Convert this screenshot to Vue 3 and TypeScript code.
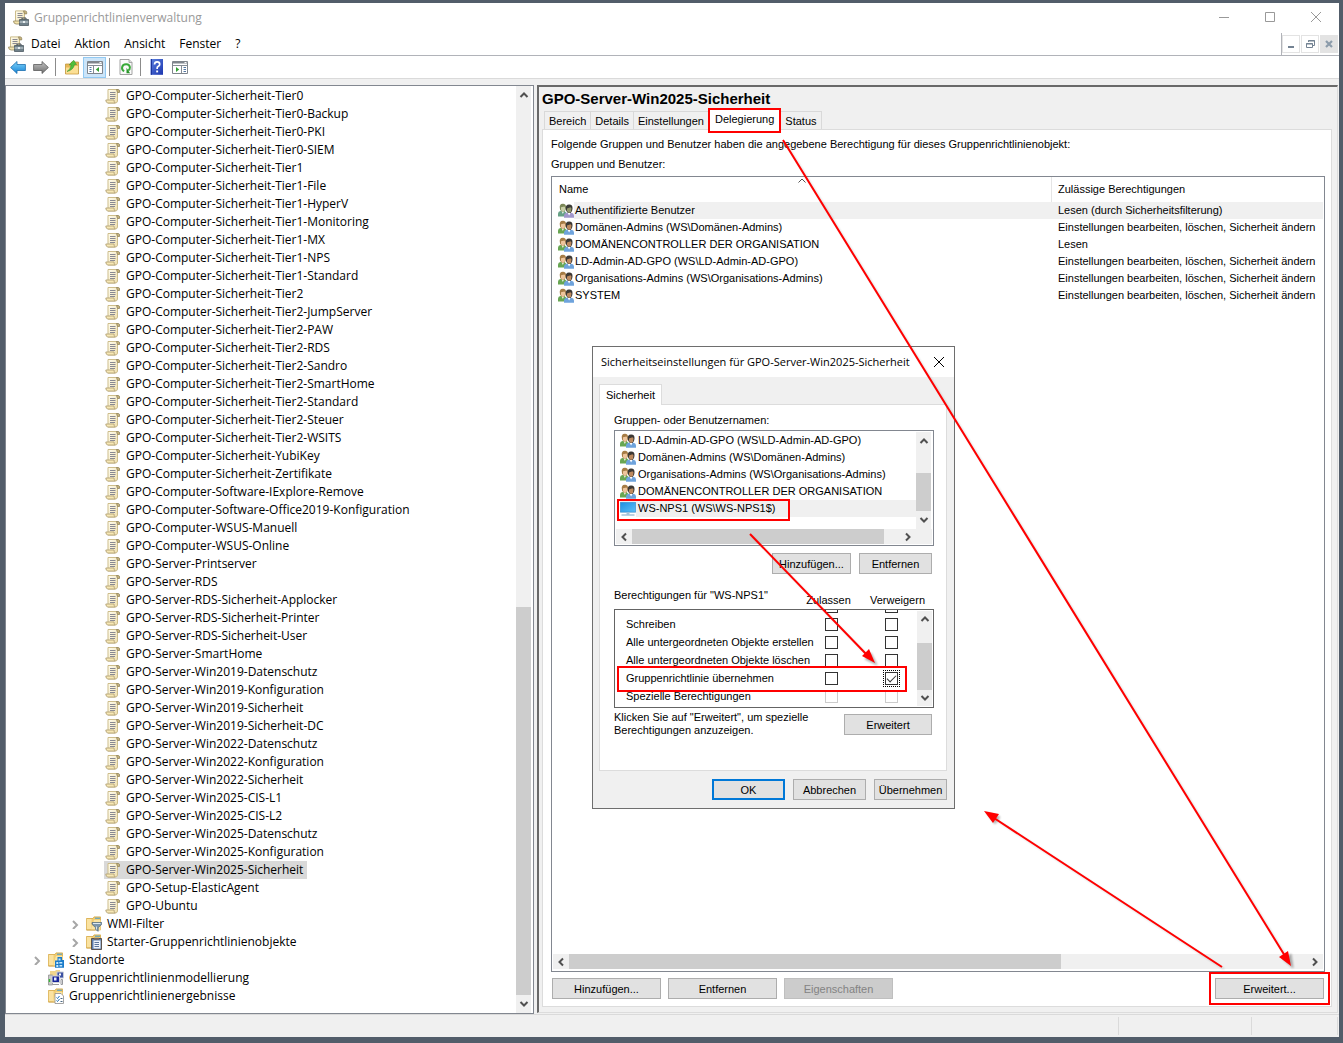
<script setup lang="ts">
import { ref } from 'vue'

interface TreeNode {
  label: string
  level: number
  icon: string
  expandable?: boolean
}

const gpoNames: string[] = [
  'GPO-Computer-Sicherheit-Tier0',
  'GPO-Computer-Sicherheit-Tier0-Backup',
  'GPO-Computer-Sicherheit-Tier0-PKI',
  'GPO-Computer-Sicherheit-Tier0-SIEM',
  'GPO-Computer-Sicherheit-Tier1',
  'GPO-Computer-Sicherheit-Tier1-File',
  'GPO-Computer-Sicherheit-Tier1-HyperV',
  'GPO-Computer-Sicherheit-Tier1-Monitoring',
  'GPO-Computer-Sicherheit-Tier1-MX',
  'GPO-Computer-Sicherheit-Tier1-NPS',
  'GPO-Computer-Sicherheit-Tier1-Standard',
  'GPO-Computer-Sicherheit-Tier2',
  'GPO-Computer-Sicherheit-Tier2-JumpServer',
  'GPO-Computer-Sicherheit-Tier2-PAW',
  'GPO-Computer-Sicherheit-Tier2-RDS',
  'GPO-Computer-Sicherheit-Tier2-Sandro',
  'GPO-Computer-Sicherheit-Tier2-SmartHome',
  'GPO-Computer-Sicherheit-Tier2-Standard',
  'GPO-Computer-Sicherheit-Tier2-Steuer',
  'GPO-Computer-Sicherheit-Tier2-WSITS',
  'GPO-Computer-Sicherheit-YubiKey',
  'GPO-Computer-Sicherheit-Zertifikate',
  'GPO-Computer-Software-IExplore-Remove',
  'GPO-Computer-Software-Office2019-Konfiguration',
  'GPO-Computer-WSUS-Manuell',
  'GPO-Computer-WSUS-Online',
  'GPO-Server-Printserver',
  'GPO-Server-RDS',
  'GPO-Server-RDS-Sicherheit-Applocker',
  'GPO-Server-RDS-Sicherheit-Printer',
  'GPO-Server-RDS-Sicherheit-User',
  'GPO-Server-SmartHome',
  'GPO-Server-Win2019-Datenschutz',
  'GPO-Server-Win2019-Konfiguration',
  'GPO-Server-Win2019-Sicherheit',
  'GPO-Server-Win2019-Sicherheit-DC',
  'GPO-Server-Win2022-Datenschutz',
  'GPO-Server-Win2022-Konfiguration',
  'GPO-Server-Win2022-Sicherheit',
  'GPO-Server-Win2025-CIS-L1',
  'GPO-Server-Win2025-CIS-L2',
  'GPO-Server-Win2025-Datenschutz',
  'GPO-Server-Win2025-Konfiguration',
  'GPO-Server-Win2025-Sicherheit',
  'GPO-Setup-ElasticAgent',
  'GPO-Ubuntu',
]

const nodes: TreeNode[] = [
  ...gpoNames.map((label) => ({ label, level: 3, icon: 'i-gpo' })),
  { label: 'WMI-Filter', level: 2, icon: 'i-wmi', expandable: true },
  { label: 'Starter-Gruppenrichtlinienobjekte', level: 2, icon: 'i-starter', expandable: true },
  { label: 'Standorte', level: 0, icon: 'i-sites', expandable: true },
  { label: 'Gruppenrichtlinienmodellierung', level: 0, icon: 'i-model' },
  { label: 'Gruppenrichtlinienergebnisse', level: 0, icon: 'i-result' },
]

const selected = ref('GPO-Server-Win2025-Sicherheit')

const menus: string[] = ['Datei', 'Aktion', 'Ansicht', 'Fenster', '?']

const tabs: string[] = ['Bereich', 'Details', 'Einstellungen', 'Delegierung', 'Status']
const activeTab = ref('Delegierung')

const full = 'Einstellungen bearbeiten, löschen, Sicherheit ändern'
const delegates = [
  { name: 'Authentifizierte Benutzer', right: 'Lesen (durch Sicherheitsfilterung)' },
  { name: 'Domänen-Admins (WS\\Domänen-Admins)', right: full },
  { name: 'DOMÄNENCONTROLLER DER ORGANISATION', right: 'Lesen' },
  { name: 'LD-Admin-AD-GPO (WS\\LD-Admin-AD-GPO)', right: full },
  { name: 'Organisations-Admins (WS\\Organisations-Admins)', right: full },
  { name: 'SYSTEM', right: full },
]

const principals = [
  { name: 'LD-Admin-AD-GPO (WS\\LD-Admin-AD-GPO)', icon: 'i-group' },
  { name: 'Domänen-Admins (WS\\Domänen-Admins)', icon: 'i-group' },
  { name: 'Organisations-Admins (WS\\Organisations-Admins)', icon: 'i-group' },
  { name: 'DOMÄNENCONTROLLER DER ORGANISATION', icon: 'i-group' },
  { name: 'WS-NPS1 (WS\\WS-NPS1$)', icon: 'i-pc' },
]
const principal = ref('WS-NPS1 (WS\\WS-NPS1$)')

const permissions = ref([
  { name: '', allow: false, deny: false, locked: false },
  { name: 'Schreiben', allow: false, deny: false, locked: false },
  { name: 'Alle untergeordneten Objekte erstellen', allow: false, deny: false, locked: false },
  { name: 'Alle untergeordneten Objekte löschen', allow: false, deny: false, locked: false },
  { name: 'Gruppenrichtlinie übernehmen', allow: false, deny: true, locked: false },
  { name: 'Spezielle Berechtigungen', allow: false, deny: false, locked: true },
])
</script>

<template>
  <div class="desktop">
    <svg class="defs" aria-hidden="true">
      <defs>
        <linearGradient id="g-paper" x1="0" x2="1" y1="0" y2="1">
          <stop offset="0" stop-color="#fffdf0" /><stop offset="1" stop-color="#efdfae" />
        </linearGradient>
        <linearGradient id="g-blue" x1="0" x2="0" y1="0" y2="1">
          <stop offset="0" stop-color="#7fd4fb" /><stop offset="1" stop-color="#1583d6" />
        </linearGradient>
        <linearGradient id="g-grey" x1="0" x2="0" y1="0" y2="1">
          <stop offset="0" stop-color="#c4c4c4" /><stop offset="1" stop-color="#6e6e6e" />
        </linearGradient>
        <linearGradient id="g-help" x1="0" x2="1" y1="0" y2="1">
          <stop offset="0" stop-color="#5b80e0" /><stop offset="1" stop-color="#1b35ae" />
        </linearGradient>
        <linearGradient id="g-screen" x1="0" x2="1" y1="0" y2="1">
          <stop offset="0" stop-color="#1e8de0" /><stop offset="1" stop-color="#5cc0f8" />
        </linearGradient>
        <symbol id="i-gpo" viewBox="0 0 16 16">
          <path d="M3 1.500H12.500V13q-.3 2-2 2H3z" fill="url(#g-paper)" stroke="#cdbd8b" />
          <path d="M11.500 1.500h2q1 .2 1 1.500v1.500h-2z" fill="#c9b67c" stroke="#91845d" stroke-width=".8" />
          <path d="M.8 12h8.200q0 2.200 1.200 3H2.800Q.9 14.800.8 12z" fill="#f7e8b4" stroke="#b3a377" stroke-width=".9" />
          <path d="M5 4.500h5.500M5 6.500h5.500M5 8.500h5.500M5 10.500h5" stroke="#8a8a92" />
        </symbol>
        <symbol id="i-app" viewBox="0 0 16 16">
          <path d="M2.500.9H11.500V12q-.3 1.500-2 1.500h-7z" fill="url(#g-paper)" stroke="#cdbd8b" />
          <path d="M10.500.9h2q1.200.2 1.200 1.500v1.500h-2.200z" fill="#c9b67c" stroke="#91845d" stroke-width=".8" />
          <path d="M4.500 3.500h5M4.500 5.500h5M4.500 7.500h4.500" stroke="#8a8a92" />
          <path d="M.5 11h8v3H3q-2.400-.2-2.500-3z" fill="#f4e4ad" stroke="#96895f" stroke-width=".8" />
          <path d="M9 9.500V8h4v1.500" fill="none" stroke="#3f474c" />
          <path d="M6.500 9.500h9v6h-9z" fill="#70818a" stroke="#3e4c54" stroke-width=".7" />
          <path d="M6.600 12h8.700" stroke="#d1dade" /><path d="M10 11h2v2h-2z" fill="#e7eef0" />
        </symbol>
        <symbol id="i-folder" viewBox="0 0 16 16">
          <path d="M.5 2.500h6.500l1-1.600h6.500v13H.5z" fill="#f0cd72" stroke="#d5a743" stroke-width=".8" />
          <path d="M9 2.200h5" stroke="#3e98d4" /><path d="M8 4h6.500v10H5z" fill="#fbe5a3" /><path d="M.8 3h4.700v10.600H.8z" fill="#fae2a0" />
          <path d="M.5 14h9" stroke="#c99c3e" stroke-width=".8" />
        </symbol>
        <symbol id="i-wmi" viewBox="0 0 16 16">
          <use href="#i-folder" />
          <path d="M6 6.500h9.800v1.800l-3.600 3.400v3.600l-2.600-1.800v-1.800L6 8.300z" fill="#7b96aa" stroke="#526b7d" stroke-width=".7" />
          <path d="M7 7.500h7.500" stroke="#dce9f1" /><path d="M10.500 10.500v3" stroke="#d6e3eb" />
        </symbol>
        <symbol id="i-starter" viewBox="0 0 16 16">
          <use href="#i-folder" />
          <path d="M5.500 4.500h10v11h-10z" fill="#5d7fae" stroke="#54473f" stroke-width=".9" />
          <path d="M7.500 6.500h7v8h-7z" fill="#eef4fb" /><path d="M8 3.800h5v2H8z" fill="#796a60" />
          <path d="M8.500 8.500h4.500M8.500 10.500h4.500M8.500 12.500h4.500" stroke="#5d779c" />
        </symbol>
        <symbol id="i-sites" viewBox="0 0 16 16">
          <use href="#i-folder" />
          <path d="M9.500 5h4.500v3h2v7.800H7V8.500h2.500z" fill="#1a7bc9" />
          <path d="M10.500 6.500h2v2h-2zM8.300 10h2v2h-2zM11.300 10h3v1.500h-3zM8.300 13h2v2h-2zM11.500 13h2.700v1.500h-2.700z" fill="#c7e8fb" />
        </symbol>
        <symbol id="i-model" viewBox="0 0 16 16">
          <path d="M2 1h5l1-1h4v7H2z" fill="#f1d68c" /><path d="M.5 5h4v10h-4z" fill="#c8cac9" stroke="#888" stroke-width=".7" />
          <path d="M1.500 9v3" stroke="#37ba35" stroke-width="1.400" />
          <path d="M9 2h6.500v6H9z" fill="#3c52a3" stroke="#c7ccd6" /><path d="M11 3.500h2v2h-2z" fill="#fff" />
          <path d="M4 6h7.500v6.500H4z" fill="#18259a" stroke="#d0d2d8" /><path d="M6 7.500h2.500v3H6z" fill="#e6edff" />
          <path d="M13 9.500h1.500v5H13zM5 14.500h6" stroke="#97989d" fill="none" />
        </symbol>
        <symbol id="i-result" viewBox="0 0 16 16">
          <use href="#i-folder" />
          <path d="M7 5.500h6l2.500 2.500v7.500H7z" fill="#fff" stroke="#8d8d8d" stroke-width=".8" />
          <path d="M8.500 9.500l1 1 2-2.500M8.500 12.500l1 1 2-2.500" fill="none" stroke="#1a6fb8" /><path d="M12.500 10.500h2M12.500 13.500h2" stroke="#4a6984" />
        </symbol>
        <symbol id="i-group" viewBox="0 0 16 16">
          <path d="M0 13.500V10.500Q.2 8.300 2.500 8h4l2 2-1 3.500z" fill="#68a653" /><path d="M3.500 8l1.300 3 1.500-3z" fill="#eef5ea" />
          <path d="M1.800 5Q1.200 1 4.700.8T8 4.500L7.600 7 6 8.700H4L2.200 7z" fill="#a67c45" />
          <path d="M3 4.200l3.500-.7.8 1.200-.5 2.600-1.400 1.400H4.300L3 7z" fill="#eec59c" />
          <path d="M6 14.800v-2.600Q6.300 10 8.700 9.700h4.600q2.500.3 2.700 2.500v2.600z" fill="#6ea3dc" /><path d="M9.600 9.700l1.500 2.800 1.500-2.800z" fill="#fff" />
          <path d="M7.800 6Q7.200 1.800 11 1.600t3.500 4.200L14 8l-1.500 2H10L8.300 8z" fill="#3c3935" />
          <path d="M9 5.500l3.500-1.200 1 1.200-.4 2.700-1.300 1.500h-1.500L9 8z" fill="#bd8a5f" />
        </symbol>
        <symbol id="i-pc" viewBox="0 0 16 16">
          <path d="M.3 1.300h15.400v9.900H.3z" fill="url(#g-screen)" stroke="#2a7fbe" stroke-width=".6" />
          <path d="M6.500 11.500h3v2h-3z" fill="#a7c4da" /><path d="M1.500 14h13" stroke="#78a5c6" />
        </symbol>
      </defs>
    </svg>

    <div class="window">
      <header class="titlebar">
        <svg class="ico"><use href="#i-app" /></svg>
        <span class="caption">Gruppenrichtlinienverwaltung</span>
        <div class="winctl">
          <button type="button" aria-label="Minimieren"><svg viewBox="0 0 12 12"><path d="M1 5.500h10" /></svg></button>
          <button type="button" aria-label="Maximieren"><svg viewBox="0 0 12 12"><path d="M1.500 .5h9v9h-9z" /></svg></button>
          <button type="button" aria-label="Schließen"><svg viewBox="0 0 12 12"><path d="M1 0l10 10M11 0L1 10" /></svg></button>
        </div>
      </header>

      <nav class="menubar">
        <svg class="ico"><use href="#i-app" /></svg>
        <button v-for="m in menus" :key="m" type="button" class="menu">{{ m }}</button>
        <div class="mdi">
          <button type="button" aria-label="Fenster minimieren"><svg viewBox="0 0 12 12"><path d="M3 9h6" stroke="#738292" stroke-width="2" /></svg></button>
          <button type="button" aria-label="Fenster wiederherstellen">
            <svg viewBox="0 0 12 12" fill="none" stroke="#738292"><path d="M4.500 4V2.500h6v5H9M4 3h7M2.500 5.500h6v4h-6zM2 6h7" /></svg>
          </button>
          <button type="button" class="off" aria-label="Fenster schließen"><svg viewBox="0 0 12 12"><path d="M3 3l6 6M9 3L3 9" stroke="#8c9cab" stroke-width="2.200" /></svg></button>
        </div>
      </nav>

      <div class="toolbar">
        <button type="button" aria-label="Zurück">
          <svg viewBox="0 0 16 16"><path d="M.6 8.500l6.400-6v3h8.400v6H7v3z" fill="url(#g-blue)" stroke="#1c6fae" stroke-width=".8" /></svg>
        </button>
        <button type="button" aria-label="Vorwärts">
          <svg viewBox="0 0 16 16"><path d="M15.400 8.500l-6.400-6v3H.6v6H9v3z" fill="url(#g-grey)" stroke="#5c5c5c" stroke-width=".8" /></svg>
        </button>
        <i class="sep"></i>
        <button type="button" aria-label="Eine Ebene nach oben">
          <svg viewBox="0 0 16 16">
            <path d="M1.500 5h5l1-2H14.500v12H1.500z" fill="#e9b856" stroke="#c2983f" stroke-width=".8" /><path d="M2 8.500h5L8.500 7H14v7.500H2z" fill="#fbdf94" />
            <path d="M3 12.500q3.500-2 4.200-6.500H5.200l4.500-4.800L12.500 5.500h-2Q9.500 11 3 12.500z" fill="#4fbf3b" stroke="#2f8f25" stroke-width=".5" />
          </svg>
        </button>
        <button type="button" class="on" aria-label="Konsolenstruktur ein-/ausblenden">
          <svg viewBox="0 0 16 16">
            <path d="M.5 2.500h15v12H.5z" fill="#fff" stroke="#7f858c" /><path d="M1 3h14v1.500H1z" fill="#7f858c" /><path d="M1 6.500h14M6.500 7v7" stroke="#858c94" />
            <path d="M2.500 8.500h2M2.500 10.500h2M2.500 12.500h2" stroke="#5276a1" /><path d="M12 8v5L8.800 10.500z" fill="#32a032" /><path d="M12.500 3.500h2" stroke="#fff" />
          </svg>
        </button>
        <i class="sep"></i>
        <button type="button" aria-label="Aktualisieren">
          <svg viewBox="0 0 16 16">
            <path d="M2 .5h9l3 3v12H2z" fill="#fafafa" stroke="#999" stroke-width=".9" /><path d="M11 .5v3h3" fill="#ddd" stroke="#999" stroke-width=".8" />
            <path d="M6.200 12.200Q3.600 11 4.100 8.200T8 5.200t3.900 3Q12 10.500 10.200 11.500" fill="none" stroke="#38a938" stroke-width="2" /><path d="M8.500 8.800v5.400h3.600z" fill="#2b962b" />
          </svg>
        </button>
        <i class="sep"></i>
        <button type="button" aria-label="Hilfe">
          <svg viewBox="0 0 16 16">
            <path d="M1.500 0h12.500v15.800H1.500z" fill="url(#g-help)" /><path d="M2.500 0v15.800" stroke="#1d349c" />
            <path d="M5.500 5.500q.2-2.700 2.700-2.600t2.500 2.300q0 1.400-1.400 2.100T8.100 10" fill="none" stroke="#fff" stroke-width="1.700" /><path d="M7.200 11.500h1.900v1.900H7.200z" fill="#fff" />
          </svg>
        </button>
        <button type="button" aria-label="Aktionsbereich ein-/ausblenden">
          <svg viewBox="0 0 16 16">
            <path d="M.5 2.500h15v12H.5z" fill="#fff" stroke="#7f858c" /><path d="M1 3h14v1.500H1z" fill="#7f858c" /><path d="M1 6.500h14M9.500 7v7" stroke="#858c94" />
            <path d="M11.500 8.500h2.500M11.500 10.500h2.500M11.500 12.500h2.500" stroke="#5276a1" /><path d="M4 8v5L7.200 10.500z" fill="#32a032" /><path d="M12.500 3.500h2" stroke="#fff" />
          </svg>
        </button>
      </div>

      <main class="workspace">
        <section class="tree">
          <ul>
            <li v-for="n in nodes" :key="n.label" :class="['lvl' + n.level]">
              <span class="twist">
                <svg v-if="n.expandable" viewBox="0 0 8 10"><path d="M2 2l4 4-4 4" /></svg>
              </span>
              <button type="button" class="node" :class="{ sel: n.label === selected }" @click="selected = n.label">
                <svg class="ico"><use :href="'#' + n.icon" /></svg>
                <span>{{ n.label }}</span>
              </button>
            </li>
          </ul>
          <div class="vbar">
            <svg class="arw" viewBox="0 0 10 10"><path d="M1.500 7L5 3.500 8.500 7" /></svg>
            <div class="track"><div class="thumb"></div></div>
            <svg class="arw" viewBox="0 0 10 10"><path d="M1.500 3L5 6.500 8.500 3" /></svg>
          </div>
        </section>

        <section class="detail">
          <h1>GPO-Server-Win2025-Sicherheit</h1>
          <div class="tabs" role="tablist">
            <button v-for="t in tabs" :key="t" type="button" role="tab" :class="{ active: t === activeTab }" @click="activeTab = t">{{ t }}</button>
          </div>
          <div class="page">
            <p>Folgende Gruppen und Benutzer haben die angegebene Berechtigung für dieses Gruppenrichtlinienobjekt:</p>
            <p>Gruppen und Benutzer:</p>
            <div class="listbox">
              <table class="grid">
                <colgroup><col class="c1" /><col /></colgroup>
                <thead>
                  <tr>
                    <th>Name<svg class="sort" viewBox="0 0 8 5"><path d="M.5 4.500L4 1l3.500 3.500" /></svg></th>
                    <th>Zulässige Berechtigungen</th>
                  </tr>
                </thead>
                <tbody>
                  <tr v-for="(d, i) in delegates" :key="d.name" :class="{ first: i === 0 }">
                    <td><div class="cell"><svg class="ico"><use href="#i-group" /></svg><span>{{ d.name }}</span></div></td>
                    <td>{{ d.right }}</td>
                  </tr>
                </tbody>
              </table>
              <div class="hbar">
                <svg class="arw" viewBox="0 0 10 10"><path d="M7 1.500L3.500 5 7 8.500" /></svg>
                <div class="track"><div class="thumb"></div></div>
                <svg class="arw" viewBox="0 0 10 10"><path d="M3 1.500L6.500 5 3 8.500" /></svg>
              </div>
            </div>
            <div class="actions">
              <button type="button" class="btn">Hinzufügen...</button>
              <button type="button" class="btn">Entfernen</button>
              <button type="button" class="btn" disabled>Eigenschaften</button>
              <button type="button" class="btn adv">Erweitert...</button>
            </div>
          </div>
        </section>
      </main>

      <footer class="status"><span></span><span></span><span></span></footer>
    </div>

    <section class="dialog" role="dialog" aria-labelledby="dlg-title">
      <header>
        <span id="dlg-title">Sicherheitseinstellungen für GPO-Server-Win2025-Sicherheit</span>
        <button type="button" aria-label="Dialog schließen"><svg viewBox="0 0 12 12"><path d="M1 1l10 10M11 1L1 11" /></svg></button>
      </header>
      <div class="dlg-body">
        <button type="button" class="dlg-tab">Sicherheit</button>
        <div class="dlg-page">
          <p class="lbl">Gruppen- oder Benutzernamen:</p>
          <div class="names">
            <div class="names-top">
              <ul>
                <li v-for="p in principals" :key="p.name" :class="{ sel: p.name === principal }" @click="principal = p.name">
                  <svg class="ico"><use :href="'#' + p.icon" /></svg><span>{{ p.name }}</span>
                </li>
              </ul>
              <div class="vbar">
                <svg class="arw" viewBox="0 0 10 10"><path d="M1.500 7L5 3.500 8.500 7" /></svg>
                <div class="track"><div class="thumb"></div></div>
                <svg class="arw" viewBox="0 0 10 10"><path d="M1.500 3L5 6.500 8.500 3" /></svg>
              </div>
            </div>
            <div class="hbar">
              <svg class="arw" viewBox="0 0 10 10"><path d="M7 1.500L3.500 5 7 8.500" /></svg>
              <div class="track"><div class="thumb"></div></div>
              <svg class="arw" viewBox="0 0 10 10"><path d="M3 1.500L6.500 5 3 8.500" /></svg>
            </div>
          </div>
          <div class="row-btns">
            <button type="button" class="btn">Hinzufügen...</button>
            <button type="button" class="btn">Entfernen</button>
          </div>
          <div class="perm-head">
            <span>Berechtigungen für "WS-NPS1"</span>
            <span class="col">Zulassen</span>
            <span class="col">Verweigern</span>
          </div>
          <div class="perms">
            <div class="perm-clip">
              <table>
                <tbody>
                  <tr v-for="p in permissions" :key="p.name">
                    <th scope="row">{{ p.name }}</th>
                    <td><input v-model="p.allow" type="checkbox" :disabled="p.locked" :aria-label="p.name + ' zulassen'" /></td>
                    <td><input v-model="p.deny" type="checkbox" :disabled="p.locked" :aria-label="p.name + ' verweigern'" /></td>
                  </tr>
                </tbody>
              </table>
            </div>
            <div class="vbar">
              <svg class="arw" viewBox="0 0 10 10"><path d="M1.500 7L5 3.500 8.500 7" /></svg>
              <div class="track"><div class="thumb"></div></div>
              <svg class="arw" viewBox="0 0 10 10"><path d="M1.500 3L5 6.500 8.500 3" /></svg>
            </div>
          </div>
          <div class="hint">
            <p>Klicken Sie auf "Erweitert", um spezielle Berechtigungen anzuzeigen.</p>
            <button type="button" class="btn">Erweitert</button>
          </div>
        </div>
        <div class="dlg-btns">
          <button type="button" class="btn default">OK</button>
          <button type="button" class="btn">Abbrechen</button>
          <button type="button" class="btn">Übernehmen</button>
        </div>
      </div>
      <i class="mark mark-principal"></i>
      <i class="mark mark-perm"></i>
    </section>

    <svg class="arrows" aria-hidden="true">
      <g class="shade">
        <path d="M785 142L1287 958M752 536L870 658M1224 969L998 821" />
        <path d="M1293 968l-10-9 8-5zM877 665l-12-6 6-6zM987 813l13 4-5 7z" />
      </g>
      <g class="ink">
        <path d="M783 140L1285 956M750 534L868 656M1222 967L994 818" />
      </g>
      <path class="heads" d="M1291 966L1279 957L1288 951zM875 663L862 656L869 649zM984 811L999 814L993 823z" />
    </svg>
  </div>
</template>

<style>
body {
  margin: 0;
}
</style>

<style scoped>
.desktop {
  --ui: 'Open Sans', 'Noto Sans', sans-serif;
  --dlg: 'Liberation Sans', Arial, sans-serif;
  --face: #f0f0f0;
  --line: #828790;
  position: relative;
  box-sizing: border-box;
  display: flex;
  min-height: 100vh;
  padding: 3px 4px 6px 5px;
  overflow: hidden;
  background: #525d6a;
  color: #000;
  font: 11px/13px var(--dlg);
}
.desktop *,
.desktop *::before,
.desktop *::after {
  box-sizing: border-box;
}
.defs {
  position: absolute;
  width: 0;
  height: 0;
}
button {
  padding: 0;
  border: 0;
  background: none;
  color: inherit;
  font: inherit;
}
ul,
p,
h1 {
  margin: 0;
  padding: 0;
  list-style: none;
}
.ico {
  flex: none;
  width: 16px;
  height: 16px;
}

/* main window */
.window {
  display: flex;
  flex: 1;
  flex-direction: column;
  min-width: 0;
  background: var(--face);
}
.titlebar {
  display: flex;
  align-items: center;
  height: 30px;
  padding-left: 8px;
  gap: 5px;
  background: #fff;
  color: #999;
  font: 12px/18px var(--ui);
}
.winctl {
  display: flex;
  align-items: center;
  margin-left: auto;
}
.winctl button {
  display: grid;
  place-items: center;
  width: 46px;
  height: 28px;
}
.winctl svg {
  width: 12px;
  height: 12px;
  fill: none;
  stroke: #999;
}
.menubar {
  display: flex;
  align-items: center;
  height: 23px;
  padding-left: 3px;
  border-bottom: 1px solid #b1b3b9;
  background: #fff;
  font: 12px/18px var(--ui);
}
.menu {
  padding: 0 7px;
}
.mdi {
  display: flex;
  align-items: center;
  align-self: stretch;
  gap: 1px;
  margin-left: auto;
  padding-right: 1px;
  border-left: 1px solid #b1b3b9;
}
.mdi button {
  display: grid;
  place-items: center;
  width: 18px;
  height: 18px;
  border: 1px solid #e3e3e3;
}
.mdi .off {
  background: #e3e3e3;
}
.mdi svg {
  width: 12px;
  height: 12px;
}
.toolbar {
  display: flex;
  align-items: center;
  height: 23px;
  padding-left: 1px;
  border-bottom: 1px solid #dadada;
  background: #fff;
}
.toolbar button {
  display: grid;
  place-items: center;
  width: 23px;
  height: 21px;
}
.toolbar svg {
  width: 16px;
  height: 16px;
}
.toolbar .on {
  border: 1px solid #92c9f2;
  background: #cce5f9;
}
.sep {
  width: 1px;
  height: 18px;
  margin: 0 4px 0 3px;
  background: #8b8b8b;
}

.workspace {
  display: flex;
  flex: 1;
  gap: 3px;
  padding: 6px 1px 0 0;
}

/* scrollbars */
.vbar,
.hbar {
  display: flex;
  flex: none;
  align-items: center;
  background: var(--face);
}
.vbar {
  flex-direction: column;
  width: 15px;
}
.hbar {
  height: 15px;
}
.arw {
  flex: none;
  width: 10px;
  height: 10px;
  margin: 4px;
  fill: none;
  stroke: #505050;
  stroke-width: 2;
}
.track {
  display: flex;
  flex: 1;
}
.vbar .track {
  flex-direction: column;
  justify-content: flex-end;
  width: 100%;
}
.hbar .track {
  height: 100%;
}
.hbar .arw {
  margin: 3px;
}
.thumb {
  background: #cdcdcd;
}

/* console tree */
.tree {
  display: flex;
  flex: 0 0 529px;
  border: 1px solid var(--line);
  background: #fff;
  font: 12px/18px var(--ui);
}
.tree ul {
  flex: 1;
  padding: 1px 0 7px;
}
.tree li {
  display: flex;
  align-items: center;
  height: 18px;
}
.lvl0 {
  padding-left: 23px;
}
.lvl2 {
  padding-left: 61px;
}
.lvl3 {
  padding-left: 80px;
}
.twist {
  display: grid;
  place-items: center;
  width: 16px;
  margin-right: 2px;
}
.twist svg {
  width: 8px;
  height: 10px;
  fill: none;
  stroke: #a6a6a6;
  stroke-width: 2;
}
.node {
  display: flex;
  align-items: center;
  height: 18px;
  padding: 0 4px 0 1px;
  gap: 5px;
  white-space: nowrap;
}
.node.sel {
  background: #d9d9d9;
}
.tree .vbar {
  margin-right: 2px;
}
.tree .thumb {
  height: 43.5%;
}

/* detail pane */
.detail {
  display: flex;
  flex: 1;
  flex-direction: column;
  min-width: 0;
  margin-bottom: 1px;
  padding: 4px 5px 5px 3px;
  border: 1px solid #dcdcdc;
  border-top: 2px solid #696969;
  border-left: 2px solid #696969;
}
h1 {
  font: bold 15px/15px 'Liberation Sans', Arial, sans-serif;
}
.tabs {
  display: flex;
  align-items: flex-end;
  height: 23px;
  padding-left: 2px;
}
.tabs button {
  height: 18px;
  padding: 2px 4px 0;
  border: 1px solid #d9d9d9;
  border-bottom: 0;
  border-left-width: 0;
}
.tabs button:first-child {
  border-left-width: 1px;
}
.tabs .active {
  position: relative;
  z-index: 1;
  height: 25px;
  margin: 0 0 -4px -1px;
  padding: 0 5px 2px;
  border: 2px solid #f00;
  background: #fff;
}
.page {
  display: flex;
  flex: 1;
  flex-direction: column;
  padding: 8px 6px 7px 8px;
  border: 1px solid #dcdcdc;
  background: #fff;
}
.page > p {
  height: 20px;
  white-space: nowrap;
}
.listbox {
  display: flex;
  flex: 1;
  flex-direction: column;
  justify-content: space-between;
  margin-top: -2px;
  padding: 0 1px 2px;
  border: 1px solid var(--line);
}
.grid {
  width: 100%;
  border-spacing: 0;
  table-layout: fixed;
}
.c1 {
  width: 499px;
}
.grid th {
  position: relative;
  height: 25px;
  padding: 0 6px;
  border-right: 1px solid #e5e5e5;
  font-weight: normal;
  text-align: left;
}
.grid th:last-child {
  border-right: 0;
}
.sort {
  position: absolute;
  top: 1px;
  left: 50%;
  width: 8px;
  height: 5px;
  margin-left: -4px;
  fill: none;
  stroke: #555;
}
.grid td {
  height: 17px;
  padding: 0 6px;
  white-space: nowrap;
}
.grid td:first-child {
  padding: 0 0 0 5px;
}
.cell {
  display: flex;
  align-items: center;
}
.cell span {
  flex: 1;
  padding-left: 1px;
  line-height: 17px;
}
.first td:last-child,
.first .cell span {
  background: #f0f0f0;
}
.first .ico {
  filter: saturate(60%) hue-rotate(40deg);
}
.listbox .hbar .thumb {
  width: 66.6%;
}
.actions {
  display: flex;
  gap: 7px;
  padding: 6px 1px 0;
}
.btn {
  height: 21px;
  padding-top: 1px;
  border: 1px solid #adadad;
  background: #e1e1e1;
}
.actions .btn {
  width: 109px;
}
.btn:disabled {
  border-color: #bfbfbf;
  background: #ccc;
  color: #838383;
}
.actions .adv {
  margin-left: auto;
  outline: 2px solid #f00;
  outline-offset: 4px;
}
.status {
  display: flex;
  justify-content: flex-end;
  height: 23px;
  padding: 2px 1px;
  border-top: 1px solid #dadada;
}
.status span {
  width: 133px;
  border-right: 1px solid #dadada;
}
.status span:last-child {
  width: 86px;
}

/* security dialog */
.dialog {
  position: absolute;
  top: 346px;
  left: 592px;
  width: 363px;
  border: 1px solid #6e6e6e;
  background: var(--face);
}
.dialog > header {
  display: flex;
  align-items: center;
  justify-content: space-between;
  height: 30px;
  padding: 0 9px 0 8px;
  background: #fff;
  font: 11px/18px var(--ui);
  white-space: nowrap;
}
.dialog > header svg {
  display: block;
  width: 12px;
  height: 12px;
  fill: none;
  stroke: #000;
}
.dlg-body {
  padding: 7px 7px 8px 6px;
}
.dlg-tab {
  display: block;
  position: relative;
  width: 63px;
  height: 21px;
  margin-bottom: -1px;
  border: 1px solid #dcdcdc;
  border-bottom: 0;
  background: #fff;
}
.dlg-page {
  height: 367px;
  padding: 9px 12px 0 14px;
  border: 1px solid #dcdcdc;
  background: #fff;
}
.names {
  margin-top: 3px;
  padding: 1px;
  border: 1px solid var(--line);
}
.names-top {
  display: flex;
  height: 97px;
}
.names ul {
  flex: 1;
}
.names li {
  display: flex;
  align-items: center;
  height: 17px;
  padding-left: 4px;
}
.names li span {
  flex: 1;
  padding-left: 2px;
  line-height: 17px;
}
.names li.sel span {
  background: #f0f0f0;
}
.names .vbar {
  margin-right: 1px;
}
.names .vbar .thumb {
  height: 38px;
}
.names .hbar {
  padding-right: 16px;
}
.names .hbar .thumb {
  width: 94%;
}
.row-btns {
  display: flex;
  justify-content: flex-end;
  gap: 8px;
  padding: 7px 2px 0 0;
}
.row-btns .btn {
  width: 73px;
}
.row-btns .btn:first-child {
  width: 79px;
}
.perm-head {
  display: flex;
  align-items: flex-end;
  height: 35px;
  padding-right: 2px;
}
.perm-head span {
  width: 69px;
  padding-bottom: 2px;
  text-align: center;
}
.perm-head span:first-child {
  flex: 1;
  padding-bottom: 7px;
  text-align: left;
}
.perms {
  display: flex;
  height: 99px;
  border: 1px solid #646464;
}
.perm-clip {
  display: flex;
  flex: 1;
  align-items: flex-end;
  padding-bottom: 2px;
  overflow: hidden;
}
.perms table {
  width: 100%;
  border-spacing: 0;
  table-layout: fixed;
}
.perms tr {
  height: 18px;
}
.perms th {
  padding: 0 0 0 11px;
  font-weight: normal;
  text-align: left;
  white-space: nowrap;
}
.perms td {
  width: 60px;
  padding: 0;
}
.perms td:last-child {
  width: 31px;
}
.perms input {
  display: block;
  width: 13px;
  height: 13px;
  margin: 0;
  border: 1px solid #333;
  background: #fff;
  appearance: none;
}
.perms input:disabled {
  border-color: #ccc;
}
.perms input:checked {
  outline: 1px dotted #000;
  outline-offset: 1px;
}
.perms input:checked::before {
  display: block;
  width: 9px;
  height: 5px;
  margin: 2px 0 0 1px;
  border: solid #333;
  border-width: 0 0 1px 1px;
  content: '';
  transform: rotate(-45deg);
}
.perms .vbar {
  margin: 1px;
}
.perms .arw {
  margin: 3px;
}
.perms .vbar .thumb {
  height: 47px;
}
.hint {
  display: flex;
  justify-content: space-between;
  padding: 3px 2px 0 0;
}
.hint p {
  width: 200px;
}
.hint .btn {
  width: 88px;
  margin-top: 3px;
}
.dlg-btns {
  display: flex;
  justify-content: flex-end;
  gap: 8px;
  padding-top: 8px;
}
.dlg-btns .btn {
  width: 73px;
}
.dlg-btns .default {
  border: 2px solid #0078d7;
}
.mark {
  position: absolute;
  border: 2px solid #f00;
}
.mark-principal {
  top: 152px;
  left: 24px;
  width: 173px;
  height: 22px;
}
.mark-perm {
  top: 319px;
  left: 24px;
  width: 290px;
  height: 26px;
}

/* callout arrows */
.arrows {
  position: absolute;
  inset: 0;
  width: 100%;
  height: 100%;
  pointer-events: none;
}
.ink {
  stroke: #f00;
  stroke-width: 2;
}
.heads {
  fill: #f00;
}
.shade {
  fill: #000;
  stroke: #000;
  stroke-width: 1;
  opacity: 0.3;
  filter: blur(1px);
}
</style>
